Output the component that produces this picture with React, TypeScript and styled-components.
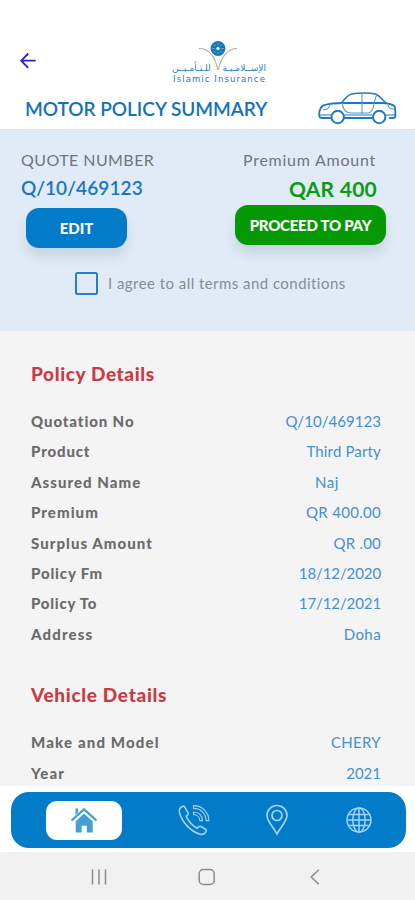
import React from "react";
import styled, { createGlobalStyle } from "styled-components";

const GlobalStyle = createGlobalStyle`
  * { box-sizing: border-box; }
  body { margin: 0; background: #fff; font-family: Lato, "Liberation Sans", sans-serif; }
  button { font-family: inherit; border: 0; padding: 0; }
`;

const Screen = styled.div`
  width: 415px;
  height: 900px;
  display: flex;
  flex-direction: column;
  overflow: hidden;
`;

const Header = styled.header`
  flex: 0 0 129px;
  display: flex;
  flex-direction: column;
  background: #fff;
`;

const TopBar = styled.div`
  height: 90px;
  display: grid;
  grid-template-columns: 158px 122px 1fr;
`;

const BackButton = styled.button`
  width: 18px;
  height: 18px;
  margin: 52px 0 0 19px;
  background: none;
  svg { display: block; }
`;

const Brand = styled.div`
  padding-top: 39px;
  display: flex;
  flex-direction: column;
  align-items: center;
  color: #2b83c0;
  svg { display: block; margin: 0 2px -10px 0; }
`;

const ArabicName = styled.div`
  width: 94px;
  height: 11px;
  display: flex;
  justify-content: space-between;
  direction: rtl;
  font: 9px/11px "DejaVu Sans", sans-serif;
  white-space: nowrap;
`;

const EnglishName = styled.div`
  height: 10px;
  font: 8.5px/10px "DejaVu Sans", sans-serif;
  letter-spacing: 1.1px;
  margin-right: -1px;
  white-space: nowrap;
  color: #1b79ba;
`;

const TitleRow = styled.div`
  flex: 1;
  display: flex;
  justify-content: space-between;
  padding: 0 18px 0 25px;
`;

const Title = styled.h1`
  margin: 7px 0 0;
  font-size: 19px;
  line-height: 24px;
  font-weight: 600;
  letter-spacing: -0.03px;
  color: #1272bb;
  white-space: nowrap;
`;

const QuotePanel = styled.section`
  flex: 0 0 202px;
  background: #e1ebf7;
  border-top: 1px solid #dce5ee;
  padding: 19px 29px 0 20px;
`;

const QuoteColumns = styled.div`
  display: flex;
  justify-content: space-between;
`;

const QuoteColumn = styled.div<{ $end?: boolean }>`
  display: flex;
  flex-direction: column;
  align-items: ${(p) => (p.$end ? "flex-end" : "flex-start")};
`;

const Caption = styled.div<{ $track: number }>`
  font-size: 16px;
  line-height: 21px;
  letter-spacing: ${(p) => p.$track}px;
  margin: 0 10px 0 1px;
  color: #6f757c;
  white-space: nowrap;
`;

const QuoteNumber = styled.div`
  margin: 5px 0 0 1px;
  font-size: 19px;
  line-height: 26px;
  font-weight: 600;
  letter-spacing: 0.1px;
  color: #1676c4;
`;

const Amount = styled.div`
  margin: 6px 9px 0 0;
  font-size: 21px;
  line-height: 26px;
  font-weight: 700;
  letter-spacing: 0.25px;
  color: #0b9a12;
`;

const ActionButton = styled.button<{ $pay?: boolean }>`
  width: ${(p) => (p.$pay ? 151 : 101)}px;
  height: 40px;
  margin: ${(p) => (p.$pay ? "3px 0 0" : "7px 0 0 6px")};
  border-radius: 13px;
  background: ${(p) => (p.$pay ? "#059a05" : "#027bc8")};
  color: #fff;
  font-size: 15px;
  line-height: 38px;
  padding-bottom: 1px;
  font-weight: 900;
  letter-spacing: ${(p) => (p.$pay ? -0.25 : 0)}px;
  white-space: nowrap;
  box-shadow: 0 9px 12px -1px rgba(80, 100, 130, 0.18);
`;

const Agreement = styled.label`
  display: flex;
  align-items: center;
  height: 24px;
  margin: 23px 0 0 55px;
  font-size: 15px;
  letter-spacing: 0.45px;
  color: #858b94;
  white-space: nowrap;
`;

const Checkbox = styled.input`
  appearance: none;
  width: 23px;
  height: 23px;
  margin: 0 10px 0 0;
  border: 2px solid #2680c9;
  border-radius: 2.5px;
`;

const Details = styled.main`
  flex: 0 0 455px;
  background: #f4f4f4;
  padding: 29px 34px 0 31px;
  overflow: hidden;
`;

const Group = styled.section`
  & + & { margin-top: 31px; }
`;

const GroupTitle = styled.h2<{ $track: number }>`
  margin: 0 0 20px;
  font-size: 19px;
  line-height: 27px;
  font-weight: 900;
  letter-spacing: ${(p) => p.$track}px;
  color: #cb3a42;
`;

const Row = styled.div`
  display: flex;
  justify-content: space-between;
  height: 30.4px;
  line-height: 28px;
  font-size: 15px;
  white-space: nowrap;
`;

const Term = styled.span<{ $track: number }>`
  font-weight: 900;
  letter-spacing: ${(p) => p.$track}px;
  color: #6b6b6b;
`;

const Value = styled.span<{ $track: number; $inset?: number }>`
  letter-spacing: ${(p) => p.$track}px;
  margin-right: ${(p) => p.$inset ?? 0}px;
  color: #4490d0;
`;

const TabArea = styled.div`
  flex: 0 0 66px;
  padding: 6px 9px 0 11px;
  background: #fff;
`;

const TabBar = styled.nav`
  height: 56px;
  border-radius: 18px;
  background: #027bc8;
  display: flex;
  align-items: center;
  padding-left: 35px;
`;

const Tab = styled.button<{ $active?: boolean; $gap?: number }>`
  width: ${(p) => (p.$active ? 76 : 34)}px;
  height: 39px;
  margin-left: ${(p) => p.$gap ?? 0}px;
  border-radius: 11px;
  background: ${(p) => (p.$active ? "#fff" : "none")};
  display: flex;
  align-items: center;
  justify-content: center;
`;

const SystemBar = styled.footer`
  flex: 0 0 48px;
  background: #f1f1f1;
  display: flex;
  align-items: center;
  justify-content: space-between;
  padding: 2px 90px 0 89px;
`;

const BackArrow = () => (
  <svg width="18" height="18" viewBox="0 0 18 18" fill="none" stroke="#2a1fdc" strokeWidth="1.8">
    <path d="M9.2 1.5 2.2 8.7l7 7.2M2.500 8.700h14.200" />
  </svg>
);

const Emblem = () => (
  <svg width="40" height="34" viewBox="0 0 40 34" fill="none">
    <path d="M1 9.500c9 0 16 7 18.800 21.500M39 9.500c-8.500 0-16 8-18.700 21.500" stroke="#b3aca5" strokeWidth="1.100" />
    <circle cx="20" cy="9.500" r="7.400" fill="#1877bb" />
    <g stroke="#8cc0e4" strokeWidth="0.800">
      <path d="M20 4v2M20 13v2M14.500 9.500h2M23.500 9.500h2M16.200 5.700l1.400 1.400M22.400 11.900l1.400 1.400M23.800 5.700l-1.400 1.400M17.600 11.900l-1.400 1.400" />
    </g>
    <circle cx="20" cy="9.500" r="1.700" fill="#d8eaf6" />
  </svg>
);

const CarIcon = () => (
  <svg width="80" height="36" viewBox="0 0 80 36" fill="none" stroke="#1f79c0" strokeWidth="1.800" strokeLinejoin="round" strokeLinecap="round">
    <path d="M13.500 28H5c-1.800 0-2.800-1-2.800-2.800 0-5 1.200-9.200 5.400-10.200 5.200-1.400 10.500-2 17.900-2H66c7 .6 11.700 2 12 4.500l.4 8c0 1.500-.8 2.500-2.200 2.500h-3.500M26.800 28h28" />
    <path d="M24.500 13c3.500-4.500 6.500-8.200 10-9 7-1.200 18.500-1.200 24 0 3.500 1.200 7 5.700 10.500 9" strokeWidth="1.500" />
    <path d="M25.500 13c-.5 5 3 10 8.500 10h17.500M45 3.500v20M59.500 4.500c-.2 3-2.300 6-2.600 9.500-.3 4-1.400 8-5.400 9" strokeWidth="1.050" stroke="#5598cc" />
    <path d="M3 25h11M27 25h28M69 25h9" strokeWidth="1.100" />
    <path d="M12.500 15.500c-.2 2.500-3 4.500-5.800 4.200M71 15c.5 2.500 3 4.200 6 4" strokeWidth="1.100" stroke="#5598cc" />
    <circle cx="20.700" cy="27" r="6.200" strokeWidth="2" fill="#fff" />
    <circle cx="62.200" cy="27" r="6.200" strokeWidth="2" fill="#fff" />
  </svg>
);

const HomeIcon = () => (
  <svg width="28" height="28" viewBox="0 0 28 28" fill="none">
    <path d="M1.500 14.500 14 3.300 26.500 14.500" stroke="#459fd3" strokeWidth="2.300" />
    <path d="M5.500 2.500H8v4l-2.500 2.300zM14 7.500l8.700 7.700V26.500h-5.900v-6.700h-5.200v6.700H5.700V15.200z" fill="#459fd3" />
  </svg>
);

const PhoneIcon = () => (
  <svg width="34" height="34" viewBox="0 0 34 34" fill="none" stroke="#a4d2f3" strokeWidth="1.600" strokeLinecap="round" strokeLinejoin="round">
    <path d="M5.800 3.200C3 4.300 1.800 6.500 2.500 9.500c2.500 9.500 10.800 19 20.500 21.700 2.500.6 5.200-.6 6.200-2.900.4-1 .1-1.500-.7-2l-4.600-2.800c-.8-.5-1.500-.3-2.200.4l-1.500 1.400c-4.500-2.500-8.500-7-11-12l1.600-1.500c.6-.6.7-1.300.3-2L7.600 3.900c-.4-.8-1-1-1.800-.7z" />
    <path d="M16.500 2.600C25 2.500 31.700 9 31.900 17.600h-2.800C28.900 10.500 23.500 5.300 16.500 5.400zM16.500 9c5.200 0 8.900 3.700 9 8.600h-2.700c-.1-3.500-2.700-6-6.300-6z" strokeWidth="1.100" />
  </svg>
);

const PinIcon = () => (
  <svg width="24" height="32" viewBox="0 0 24 32" fill="none" stroke="#a4d2f3" strokeWidth="1.700">
    <path d="M12 30C9.500 24.500 2 17.500 2 11.500a10 10 0 0 1 20 0c0 6-7.500 13-10 18.500z" />
    <circle cx="12" cy="11.500" r="5" />
  </svg>
);

const GlobeIcon = () => (
  <svg width="28" height="28" viewBox="0 0 28 28" fill="none" stroke="#a4d2f3" strokeWidth="1.500">
    <circle cx="14" cy="14" r="12" />
    <ellipse cx="14" cy="14" rx="6.200" ry="12" />
    <path d="M14 2v24M2 14h24M4 8.500h20M4 19.500h20" />
  </svg>
);

const RecentsIcon = () => (
  <svg width="20" height="18" viewBox="0 0 20 18" stroke="#8b8b8b" strokeWidth="1.500">
    <path d="M3.500 1.500v15M10 1.500v15M16.500 1.500v15" />
  </svg>
);

const HomeKeyIcon = () => (
  <svg width="20" height="18" viewBox="0 0 20 18" fill="none" stroke="#8b8b8b" strokeWidth="1.500">
    <rect x="2.200" y="1.500" width="15" height="15" rx="4.300" />
  </svg>
);

const BackKeyIcon = () => (
  <svg width="20" height="18" viewBox="0 0 20 18" fill="none" stroke="#8b8b8b" strokeWidth="1.500">
    <path d="M13.800 1.800 6.200 9l7.600 7.200" />
  </svg>
);

type Item = { term: string; termTrack: number; value: string; track: number; inset?: number };

const policy: Item[] = [
  { term: "Quotation No", termTrack: 0.9, value: "Q/10/469123", track: 0.05 },
  { term: "Product", termTrack: 0.85, value: "Third Party", track: 0.15 },
  { term: "Assured Name", termTrack: 1.05, value: "Naj", track: 0.6, inset: 42 },
  { term: "Premium", termTrack: 1.05, value: "QR 400.00", track: 0.3 },
  { term: "Surplus Amount", termTrack: 1.05, value: "QR .00", track: 0.2 },
  { term: "Policy Fm", termTrack: 0.85, value: "18/12/2020", track: -0.1 },
  { term: "Policy To", termTrack: 0.75, value: "17/12/2021", track: -0.1 },
  { term: "Address", termTrack: 1.15, value: "Doha", track: 0.4 },
];

const vehicle: Item[] = [
  { term: "Make and Model", termTrack: 1.15, value: "CHERY", track: 0.3 },
  { term: "Year", termTrack: 1.1, value: "2021", track: 0 },
];

const DetailGroup = ({ title, track, items }: { title: string; track: number; items: Item[] }) => (
  <Group>
    <GroupTitle $track={track}>{title}</GroupTitle>
    {items.map((item) => (
      <Row key={item.term}>
        <Term $track={item.termTrack}>{item.term}</Term>
        <Value $track={item.track} $inset={item.inset}>{item.value}</Value>
      </Row>
    ))}
  </Group>
);

export default function App() {
  return (
    <Screen>
      <GlobalStyle />
      <Header>
        <TopBar>
          <BackButton aria-label="Back"><BackArrow /></BackButton>
          <Brand>
            <Emblem />
            <ArabicName><span>الإســلامـيـة</span><span>للـتـأمـيــن</span></ArabicName>
            <EnglishName>Islamic Insurance</EnglishName>
          </Brand>
        </TopBar>
        <TitleRow>
          <Title>MOTOR POLICY SUMMARY</Title>
          <CarIcon />
        </TitleRow>
      </Header>
      <QuotePanel>
        <QuoteColumns>
          <QuoteColumn>
            <Caption $track={0.43}>QUOTE NUMBER</Caption>
            <QuoteNumber>Q/10/469123</QuoteNumber>
            <ActionButton>EDIT</ActionButton>
          </QuoteColumn>
          <QuoteColumn $end>
            <Caption $track={0.75}>Premium Amount</Caption>
            <Amount>QAR 400</Amount>
            <ActionButton $pay>PROCEED TO PAY</ActionButton>
          </QuoteColumn>
        </QuoteColumns>
        <Agreement>
          <Checkbox type="checkbox" />
          I agree to all terms and conditions
        </Agreement>
      </QuotePanel>
      <Details>
        <DetailGroup title="Policy Details" track={0.62} items={policy} />
        <DetailGroup title="Vehicle Details" track={0.68} items={vehicle} />
      </Details>
      <TabArea>
        <TabBar>
          <Tab $active aria-label="Home"><HomeIcon /></Tab>
          <Tab $gap={55} aria-label="Call"><PhoneIcon /></Tab>
          <Tab $gap={49} aria-label="Locations"><PinIcon /></Tab>
          <Tab $gap={48} aria-label="Language"><GlobeIcon /></Tab>
        </TabBar>
      </TabArea>
      <SystemBar>
        <RecentsIcon />
        <HomeKeyIcon />
        <BackKeyIcon />
      </SystemBar>
    </Screen>
  );
}
